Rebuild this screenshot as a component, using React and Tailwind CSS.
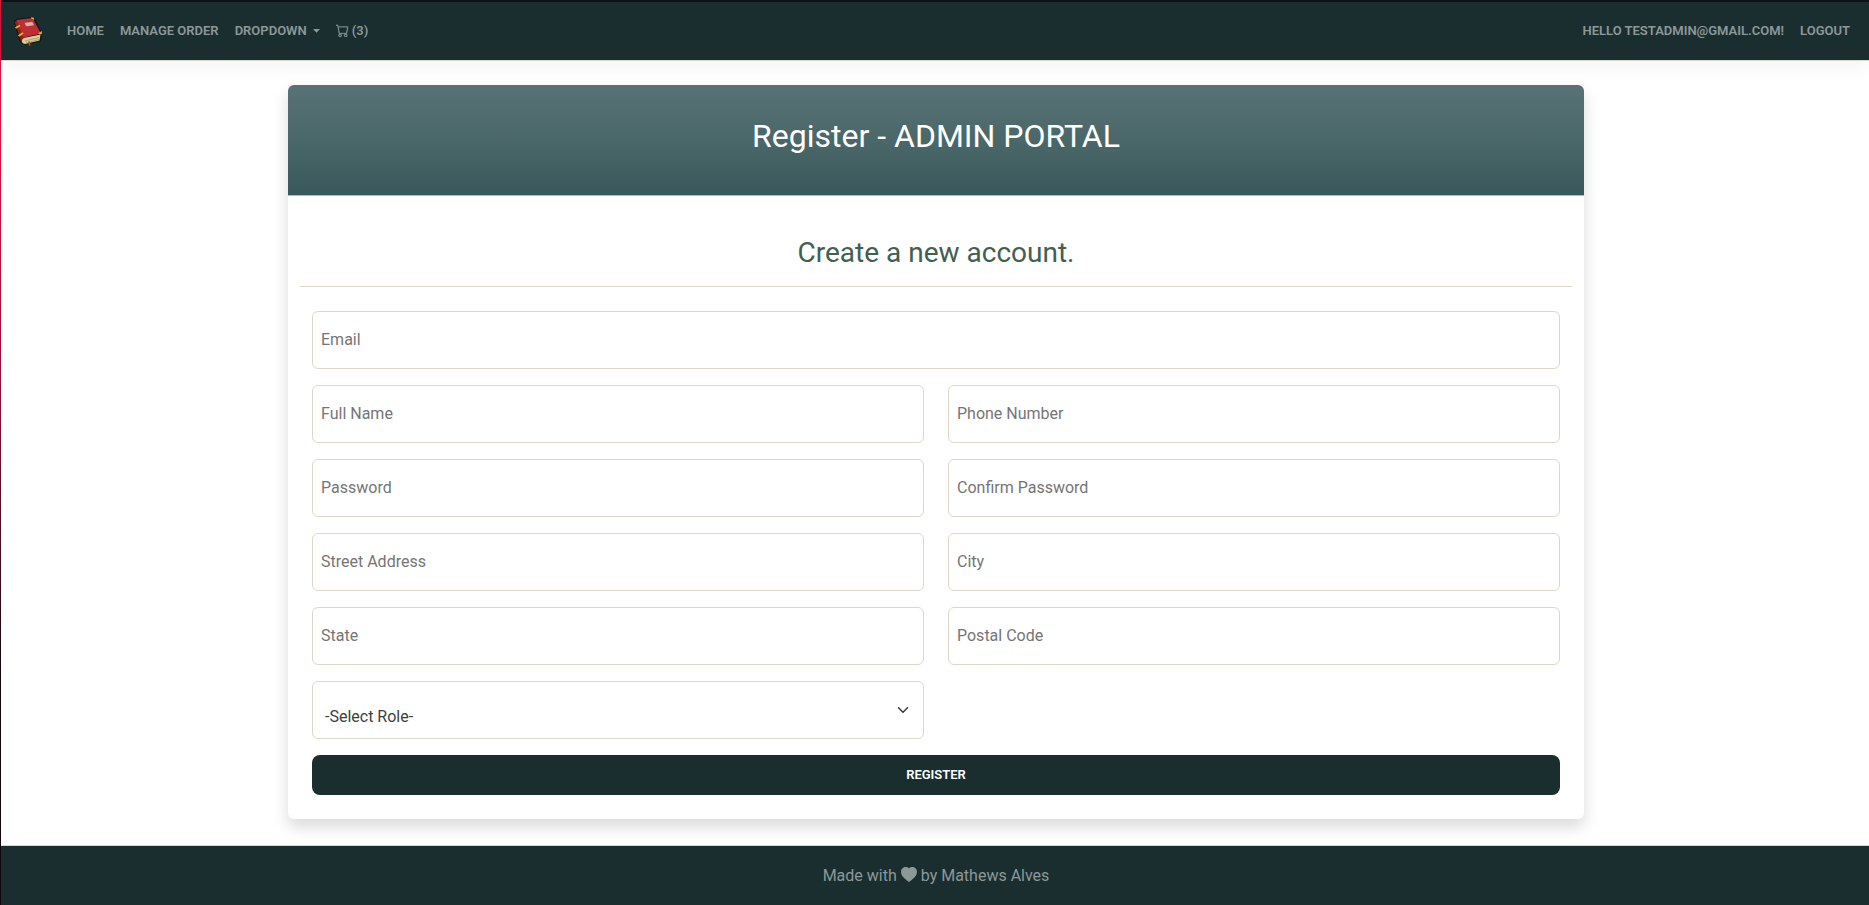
import React from "react";

const linkClass = "font-semibold text-[13px] leading-5 uppercase text-[#8d9898] hover:text-white";

function Book() {
  return (
    <svg viewBox="0 0 30 30" className="h-[30px] w-[30px]" aria-hidden="true">
      <path d="M.8 5 L4 2.500 L20 .8 L22 2.500 L29 17 L28 25.500 L12 29 L7.500 27 L5 21Z" fill="#191616" />
      <path d="M1.800 6 L4 4.500 L11 21.500 L8.500 26.500Z" fill="#8f1f22" />
      <path d="M3.500 4 L19.500 2 L28 17.500 L10.500 21.500Z" fill="#bd2f33" />
      <path d="M9 24.500 Q9.500 21.800 13 21.500 L27.500 18.500 L26.500 24.500 L12 28 Q8.500 27.500 9 24.500Z" fill="#d4cd9c" />
      <path d="M12 25 L26 21.500 M13 26.800 L26 23.500" stroke="#99936a" strokeWidth=".7" />
      <path d="M11 6.500 L19.500 5.500 L21.500 9.500 L13 10.800Z" fill="#e9a5a8" stroke="#8f1f22" strokeWidth=".5" />
      <path d="M2.500 12 L7 9.500 M5.500 20 L10 17" stroke="#e0b416" strokeWidth="2" />
      <path d="M18 1.800 L20.500 1.800 L21 3.500Z M25.500 17.500 L28.500 15.500 L28.500 18Z" fill="#f0c419" stroke="#f0c419" strokeWidth=".5" />
      <path d="M16 25.500 L16.800 29.500" stroke="#a3621d" strokeWidth="1.600" />
    </svg>
  );
}

function Cart() {
  return (
    <svg viewBox="0 0 16 16" className="mb-0.5 h-[13px] w-[13px]" fill="currentColor" aria-hidden="true">
      <path d="M0 1.500A.5.5 0 0 1 .5 1H2a.5.5 0 0 1 .485.379L2.890 3H14.500a.5.5 0 0 1 .491.592l-1.500 8A.5.5 0 0 1 13 12H4a.5.5 0 0 1-.491-.408L2.010 3.607 1.610 2H.5a.5.5 0 0 1-.5-.5zM3.102 4l1.313 7h8.170l1.313-7H3.102zM5 12a2 2 0 1 0 0 4 2 2 0 0 0 0-4zm7 0a2 2 0 1 0 0 4 2 2 0 0 0 0-4zm-7 1a1 1 0 1 1 0 2 1 1 0 0 1 0-2zm7 0a1 1 0 1 1 0 2 1 1 0 0 1 0-2z" stroke="currentColor" strokeWidth=".3" />
    </svg>
  );
}

const fields = [
  { id: "email", label: "Email", type: "email", wide: true },
  { id: "name", label: "Full Name", type: "text" },
  { id: "phone", label: "Phone Number", type: "tel" },
  { id: "password", label: "Password", type: "password" },
  { id: "confirm", label: "Confirm Password", type: "password" },
  { id: "street", label: "Street Address", type: "text" },
  { id: "city", label: "City", type: "text" },
  { id: "state", label: "State", type: "text" },
  { id: "postal", label: "Postal Code", type: "text" },
];

function Field({ id, label, type, wide }) {
  return (
    <div className={wide ? "col-span-2" : ""}>
      <input
        id={id}
        type={type}
        aria-label={label}
        placeholder={label}
        className="block h-[58px] w-full rounded-md border border-[#dfd7ca] bg-white px-2 pb-4 pt-[15px] text-base text-[#3e3f3a] outline-none placeholder:text-[#757575] focus:border-[#1a2e30]"
      />
    </div>
  );
}

export default function App() {
  return (
    <div className="flex min-h-screen bg-white font-['Roboto',sans-serif] font-normal text-[#3e3f3a]">
      <div className="w-px shrink-0 bg-linear-to-b from-[#dc143c] from-15% via-[#9a1038] via-40% to-[#14060f] to-75%" />
      <div className="flex min-w-0 flex-1 flex-col border-t-2 border-[#12101c]">
        <header className="border-b border-[#dfd7ca] bg-[#1a2e30] shadow-[0_8px_16px_rgba(0,0,0,0.04)]">
          <nav className="flex h-[58px] items-center px-3">
            <a href="#home" aria-label="Bookstore" className="mr-6"><Book /></a>
            <div className="flex items-center gap-4">
              <a href="#home" className={linkClass}>Home</a>
              <a href="#orders" className={linkClass}>Manage Order</a>
              <button type="button" className={`${linkClass} flex items-center gap-1.5`}>
                Dropdown
                <svg viewBox="0 0 7 4" className="h-1 w-[7px]" fill="currentColor" aria-hidden="true"><path d="M0 0h7L3.500 3.700z" /></svg>
              </button>
              <a href="#cart" className={`${linkClass} flex items-center gap-[3px]`}><Cart />(3)</a>
            </div>
            <div className="ml-auto flex items-center gap-4 pr-[7px]">
              <a href="#account" className={linkClass}>Hello testadmin@gmail.com!</a>
              <button type="button" className={linkClass}>Logout</button>
            </div>
          </nav>
        </header>

        <main className="mx-auto w-full max-w-[1322px] flex-1 pb-[26px] pl-[14px] pr-3 pt-6">
          <section className="rounded-md bg-white shadow-[0_8px_16px_rgba(0,0,0,0.15)]">
            <div className="rounded-t-md border-b border-[#b0bab6] bg-linear-to-b from-[#587275] via-[#4a6769] to-[#3a585b] pb-10 pt-8 text-center">
              <h1 className="text-[32px] font-normal leading-[38px] text-white">Register - ADMIN PORTAL</h1>
            </div>
            <div className="px-3 pb-6 pt-10">
              <h2 className="pb-4 text-center text-[28px] font-normal leading-[34px] text-[#41604f]">Create a new account.</h2>
              <hr className="mb-6 border-[#dfd7ca]" />
              <form className="grid grid-cols-2 gap-x-6 gap-y-4 px-3" onSubmit={(e) => e.preventDefault()}>
                {fields.map((f) => <Field key={f.id} {...f} />)}
                <div className="relative">
                  <select aria-label="Role" defaultValue="" className="block h-[58px] w-full appearance-none rounded-md border border-[#dfd7ca] bg-white px-3 pb-1.5 pt-5 text-base text-[#3e3f3a] outline-none">
                    <option value="">-Select Role-</option>
                    <option>Admin</option>
                    <option>Customer</option>
                  </select>
                  <svg viewBox="0 0 16 16" className="pointer-events-none absolute right-[15px] top-[23px] h-3 w-3" fill="none" stroke="#343a40" strokeLinecap="round" strokeLinejoin="round" strokeWidth="2" aria-hidden="true"><path d="m2 5 6 6 6-6" /></svg>
                </div>
                <button type="submit" className="col-span-2 h-10 rounded-lg bg-[#1a2e30] text-[13px] font-semibold uppercase leading-5 text-white">Register</button>
              </form>
            </div>
          </section>
        </main>

        <footer className="border-t border-[#dfd7ca] bg-[#1a2e30]">
          <p className="flex h-[59px] items-center justify-center gap-1 pl-0.5 text-base font-normal text-[#8d9898]">
            Made with
            <svg viewBox="0 0 16 16" className="mb-0.5 h-4 w-4" fill="currentColor" role="img" aria-label="love"><path fillRule="evenodd" d="M8 1.314C12.438-3.248 23.534 4.735 8 15-7.534 4.736 3.562-3.248 8 1.314z" /></svg>
            by Mathews Alves
          </p>
        </footer>
      </div>
    </div>
  );
}
